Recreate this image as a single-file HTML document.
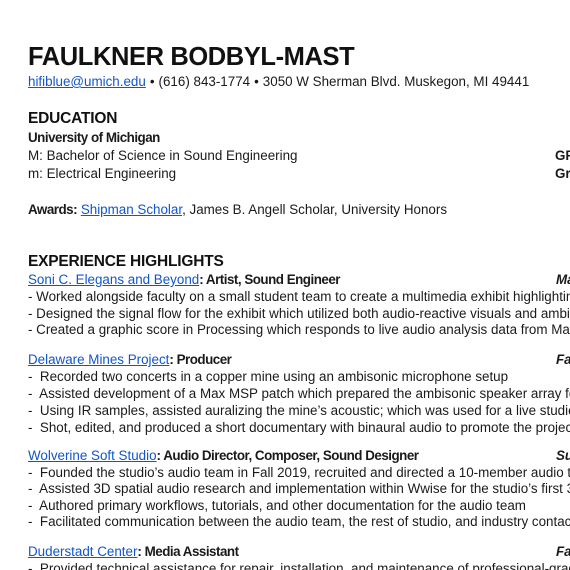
<!DOCTYPE html>
<html><head><meta charset="utf-8"><style>
html,body{margin:0;padding:0;width:570px;height:570px;overflow:hidden;background:#fff}
body{position:relative;font-family:"Liberation Sans",Arial,sans-serif;color:#1a1a1a;font-size:13.4px;letter-spacing:0px}
.l{position:absolute;left:28px;white-space:nowrap;line-height:16px;height:16px}
.r{position:absolute;left:556px;white-space:nowrap;line-height:16px;font-weight:bold;font-style:italic}
b{font-weight:bold;letter-spacing:-0.5px}
a{color:#1155cc;text-decoration:underline}
h1{position:absolute;left:28px;top:42px;margin:0;font-size:25.5px;line-height:30px;font-weight:bold;letter-spacing:-0.4px;color:#111}
.h{font-size:15.5px;font-weight:bold;letter-spacing:-0.2px;color:#111}
.d{margin:0 4px}
</style></head><body>
<h1>FAULKNER BODBYL-MAST</h1>
<div class="l" style="top:74px"><a>hifiblue@umich.edu</a><span class="d">•</span>(616) 843-1774<span class="d">•</span>3050 W Sherman Blvd. Muskegon, MI 49441</div>

<div class="l h" style="top:111px">EDUCATION</div>
<div class="l" style="top:130px"><b>University of Michigan</b></div>
<div class="l" style="top:148px">M: Bachelor of Science in Sound Engineering</div>
<div class="r" style="top:148px;font-style:normal;left:555px">GPA</div>
<div class="l" style="top:166px">m: Electrical Engineering</div>
<div class="r" style="top:166px;font-style:normal;left:555px">Graduation</div>
<div class="l" style="top:202px"><b>Awards:</b> <a>Shipman Scholar</a>, James B. Angell Scholar, University Honors</div>

<div class="l h" style="top:254px">EXPERIENCE HIGHLIGHTS</div>
<div class="l" style="top:272px"><a>Soni C. Elegans and Beyond</a><b>: Artist, Sound Engineer</b></div>
<div class="r" style="top:272px">May</div>
<div class="l" style="top:289px">- Worked alongside faculty on a small student team to create a multimedia exhibit highlighting</div>
<div class="l" style="top:306px">- Designed the signal flow for the exhibit which utilized both audio-reactive visuals and ambisonic</div>
<div class="l" style="top:322px">- Created a graphic score in Processing which responds to live audio analysis data from Max MSP</div>

<div class="l" style="top:352px"><a>Delaware Mines Project</a><b>: Producer</b></div>
<div class="r" style="top:352px">Fall</div>
<div class="l" style="top:369px">-&nbsp; Recorded two concerts in a copper mine using an ambisonic microphone setup</div>
<div class="l" style="top:386px">-&nbsp; Assisted development of a Max MSP patch which prepared the ambisonic speaker array for</div>
<div class="l" style="top:403px">-&nbsp; Using IR samples, assisted auralizing the mine’s acoustic; which was used for a live studio performance</div>
<div class="l" style="top:420px">-&nbsp; Shot, edited, and produced a short documentary with binaural audio to promote the project</div>

<div class="l" style="top:448px"><a>Wolverine Soft Studio</a><b>: Audio Director, Composer, Sound Designer</b></div>
<div class="r" style="top:448px">Summer</div>
<div class="l" style="top:465px">-&nbsp; Founded the studio’s audio team in Fall 2019, recruited and directed a 10-member audio team</div>
<div class="l" style="top:481px">-&nbsp; Assisted 3D spatial audio research and implementation within Wwise for the studio’s first 3D game</div>
<div class="l" style="top:498px">-&nbsp; Authored primary workflows, tutorials, and other documentation for the audio team</div>
<div class="l" style="top:514px">-&nbsp; Facilitated communication between the audio team, the rest of studio, and industry contacts</div>

<div class="l" style="top:544px"><a>Duderstadt Center</a><b>: Media Assistant</b></div>
<div class="r" style="top:544px">Fall</div>
<div class="l" style="top:561px">-&nbsp; Provided technical assistance for repair, installation, and maintenance of professional-grade</div>
</body></html>
